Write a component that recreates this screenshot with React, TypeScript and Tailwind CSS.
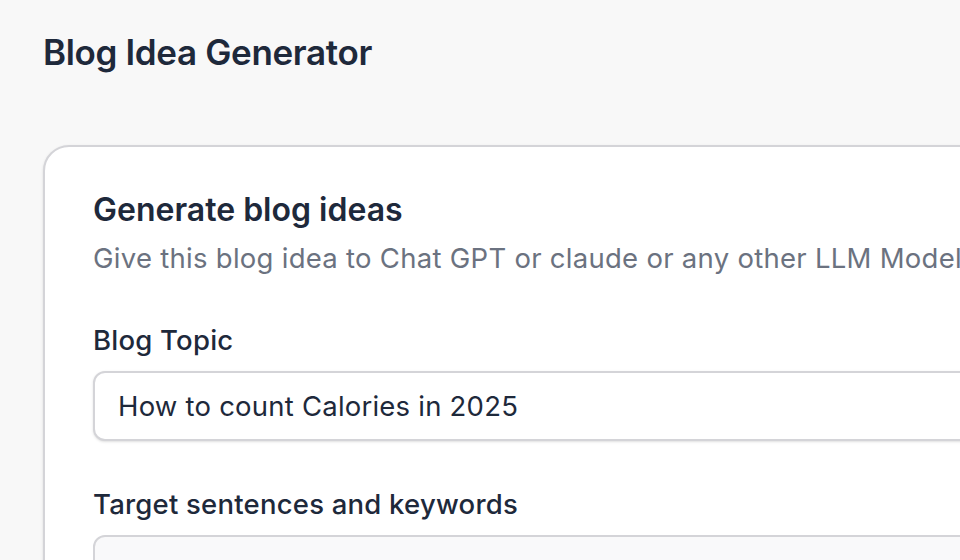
import React from 'react'

export default function App() {
  return (
    <div
      className="w-[960px] h-[560px] overflow-hidden bg-[#f8f8f8] text-[#1e293b]"
      style={{ fontFamily: 'Inter, "Noto Sans", sans-serif' }}
    >
      <div className="pl-[43px] pt-[29px]">
        {/* Header */}
        <h1 className="text-[35px] leading-[46px] font-semibold tracking-[-0.01em]">
          Blog Idea Generator
        </h1>

        {/* Card */}
        <div className="mt-[70px] w-[1200px] bg-white border-2 border-[#d4d4d8] rounded-[26px] shadow-sm px-[48px] pt-[43px] pb-[40px]">
          <h2 className="text-[32px] leading-[40px] font-semibold">Generate blog ideas</h2>
          <p className="mt-[9px] text-[27.5px] leading-[38px] text-[#6b7280] tracking-[0.01em] whitespace-nowrap">
            Give this blog idea to Chat GPT or claude or any other LLM Model
          </p>

          <div className="mt-[45px] flex flex-col gap-[13px]">
            <label className="text-[27.5px] leading-[36px] font-medium tracking-[0.008em]">Blog Topic</label>
            <input
              readOnly
              value="How to count Calories in 2025"
              className="w-[900px] h-[70px] px-[23px] border-2 border-[#d4d4d8] rounded-[12px] bg-white text-[27.5px] tracking-[0.008em] text-[#1e293b] shadow-sm outline-none"
              style={{ fontFamily: 'inherit' }}
            />
          </div>

          <div className="mt-[45px] flex flex-col gap-[13px]">
            <label className="text-[27.5px] leading-[36px] font-medium tracking-[0.008em]">Target sentences and keywords</label>
            <textarea
              readOnly
              className="w-[900px] h-[140px] px-[23px] py-[18px] border-2 border-[#d4d4d8] rounded-[12px] bg-[#f9f9fa] text-[27.5px] resize-none outline-none"
            />
          </div>
        </div>
      </div>
    </div>
  )
}
